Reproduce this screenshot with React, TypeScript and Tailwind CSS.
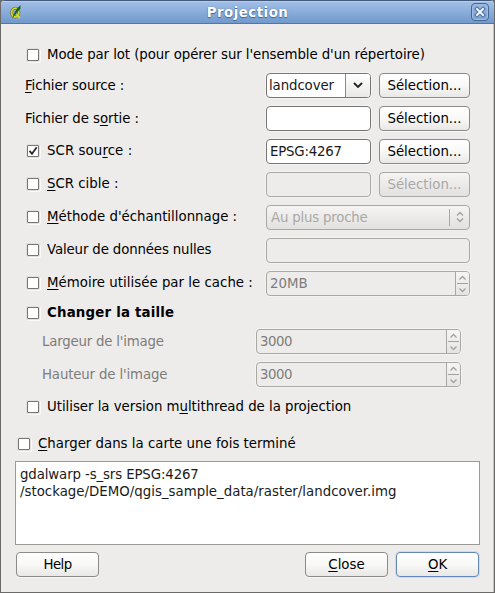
import React, { type ReactNode } from "react";

const U = ({ children }: { children: ReactNode }) => (
  <span className="underline decoration-1 underline-offset-2 [text-decoration-skip-ink:none]">{children}</span>
);

function Check({ checked = false }: { checked?: boolean }) {
  return (
    <span className="flex size-3 shrink-0 items-center justify-center rounded-[1px] border border-[#777674] bg-white shadow-[0_0_0_1px_#e2e0de,1px_1px_0_1px_#f9f9f8]">
      {checked && (
        <svg viewBox="0 0 10 10" className="size-[10px]" fill="none" stroke="#2b2932" strokeWidth="1.8">
          <path d="M1.5 4.8 4 7.8 8.7 1.2" />
        </svg>
      )}
    </span>
  );
}

function CheckLabel({ checked, className = "", children }: { checked?: boolean; className?: string; children: ReactNode }) {
  return (
    <label className={`flex h-6 shrink-0 items-center gap-2 whitespace-nowrap ${className}`}>
      <Check checked={checked} />
      <span className="pb-px">{children}</span>
    </label>
  );
}

function Button({ disabled = false, primary = false, className = "", children }: { disabled?: boolean; primary?: boolean; className?: string; children: ReactNode }) {
  const tone = disabled
    ? "border-[#a9a8a5] bg-linear-to-b from-[#f5f4f3] to-[#e2e1df] text-[#a9a8a6]"
    : primary
      ? "border-[#6488b8] bg-linear-to-b from-white via-[#f8f8f7] to-[#e9e8e6] shadow-[0_0_0_1px_#cfdcec]"
      : "border-[#8c8a86] bg-linear-to-b from-white via-[#f8f8f7] to-[#e9e8e6] shadow-[0_1px_0_#f8f8f7]";
  return (
    <button className={`flex h-[25px] shrink-0 items-center justify-center rounded-[4px] border pb-px ${tone} ${className}`}>
      {children}
    </button>
  );
}

function Field({ disabled = false, className = "", children }: { disabled?: boolean; className?: string; children?: ReactNode }) {
  const tone = disabled
    ? "border-[#a9a8a5] bg-[#edeceb] text-[#7d7c7a] shadow-[0_0_0_1px_#f4f3f2]"
    : "border-[#777674] bg-white text-[#1a1a1a] shadow-[0_0_0_1px_#f4f3f2]";
  return (
    <div className={`flex h-[25px] shrink-0 items-center overflow-hidden rounded-[4px] border ${tone} ${className}`}>
      {children}
    </div>
  );
}

function Spin({ value, className }: { value: string; className: string }) {
  return (
    <Field disabled className={className}>
      <span className="flex-1 pb-px pl-[3px]">{value}</span>
      <span className="flex h-full w-[14px] flex-col items-center justify-between border-l border-[#a9a8a5] bg-linear-to-b from-[#f6f5f4] to-[#e5e4e2]">
        <svg viewBox="0 0 13 23" className="h-[23px] w-[13px]" fill="none" stroke="#a3a19e">
          <path d="M3.5 7.5 6.5 4.5 9.5 7.5M3.5 16.5 6.5 19.5 9.5 16.5" strokeWidth="1.3" />
          <path d="M1 11.5H12" />
        </svg>
      </span>
    </Field>
  );
}

function Row({ label, children }: { label: ReactNode; children?: ReactNode }) {
  return (
    <div className="flex h-[25px] items-start">
      <div className="w-[241px] shrink-0 whitespace-nowrap">{label}</div>
      <div className="flex gap-2">{children}</div>
    </div>
  );
}

export default function App() {
  return (
    <div className="h-[593px] w-[495px] bg-[#6c6a68] font-['DejaVu_Sans',sans-serif] text-[13.33px] leading-[17px] text-black">
      <div className="flex h-full flex-col overflow-hidden rounded-t-[5px] border-x border-b border-[#6c6a68] bg-[#edeceb]">
        <header className="flex h-6 shrink-0 items-center justify-between border-t border-b border-t-[#42597a] border-b-[#5276a8] bg-linear-to-b from-[#a3c0e6] to-[#7199cd] pr-[5px] pl-[9px] shadow-[inset_0_1px_0_#b6cdec]">
          <svg viewBox="0 0 12 16" className="h-4 w-3 shrink-0">
            <ellipse cx="5.3" cy="8.6" rx="3.6" ry="4.4" fill="none" stroke="#5e6a18" strokeWidth="2.8" />
            <ellipse cx="5.3" cy="8.6" rx="3.6" ry="4.4" fill="none" stroke="#d6d32a" strokeWidth="1.8" />
            <path d="M6.5 10.5 9.8 14" stroke="#d6d32a" strokeWidth="2.2" />
            <path d="M2 14.5 4.6 8.5 7 4.5 10.6 1 10.4 4.8 7 8.5Z" fill="#17601f" />
          </svg>
          <h1 className="flex-1 pl-[2px] text-center font-bold tracking-[0.5px] text-white [text-shadow:0_1px_1px_#3f659b,0_0_1px_#3f659b]">Projection</h1>
          <button className="flex size-[18px] shrink-0 items-center justify-center rounded-[4px] border border-[#44678f] bg-linear-to-b from-[#98b7df] to-[#7ea2d2] shadow-[inset_0_0_0_1px_#9fbde4]">
            <svg viewBox="0 0 12 12" className="size-3" fill="none" strokeLinecap="square">
              <path d="M3 3 9 9M9 3 3 9" stroke="#456b9f" strokeWidth="4" />
              <path d="M3 3 9 9M9 3 3 9" stroke="#f3f7fc" strokeWidth="2" />
            </svg>
          </button>
        </header>

        <main className="flex flex-1 flex-col border-r border-[#c5c2bf] px-[14px]">
          <CheckLabel className="mt-[19px] pl-3 tracking-[-0.08px]">Mode par lot (pour opérer sur l'ensemble d'un répertoire)</CheckLabel>

          <section className="mt-[6px] flex flex-col gap-2 pl-[10px]">
            <Row label={<div className="pt-1 pl-px -ml-px tracking-[-0.1px]"><U>F</U>ichier source :</div>}>
              <Field className="w-[105px]">
                <span className="flex-1 pl-[2px] tracking-[-0.1px]">landcover</span>
                <span className="flex h-full w-[25px] items-center justify-center border-l border-[#8c8a86] bg-linear-to-b from-white to-[#e9e8e6]">
                  <svg viewBox="0 0 10 7" className="h-[7px] w-[10px]" fill="none" stroke="#222" strokeWidth="1.8">
                    <path d="M1 1 5 5 9 1" />
                  </svg>
                </span>
              </Field>
              <Button className="w-[91px]">Sélection...</Button>
            </Row>
            <Row label={<div className="pt-1 tracking-[-0.06px]">Fichier de s<U>o</U>rtie :</div>}>
              <Field className="w-[105px]" />
              <Button className="w-[91px]">Sélection...</Button>
            </Row>
            <Row label={<CheckLabel checked className="pl-[2px] tracking-[0.08px]">SCR sou<U>r</U>ce :</CheckLabel>}>
              <Field className="w-[105px] pl-[3px] tracking-[-0.2px]">EPSG:4267</Field>
              <Button className="w-[91px]">Sélection...</Button>
            </Row>
            <Row label={<CheckLabel className="pl-[2px]"><U>S</U>CR cible :</CheckLabel>}>
              <Field disabled className="w-[105px]" />
              <Button disabled className="w-[91px]">Sélection...</Button>
            </Row>
            <Row label={<CheckLabel className="pl-[2px]"><U>M</U>éthode d'échantillonnage :</CheckLabel>}>
              <Button disabled className="w-[204px] pl-1">
                <span className="flex-1 text-left tracking-[-0.2px]">Au plus proche</span>
                <span className="flex h-[17px] w-5 items-center justify-center border-l border-[#a9a8a5]">
                  <svg viewBox="0 0 8 12" className="h-3 w-2" fill="none" stroke="#a3a19e" strokeWidth="1.4">
                    <path d="M1 4.5 4 1.5 7 4.5M1 7.5 4 10.5 7 7.5" />
                  </svg>
                </span>
              </Button>
            </Row>
            <Row label={<CheckLabel className="pl-[2px] tracking-[-0.14px]">Valeur de données nulles</CheckLabel>}>
              <Field disabled className="w-[204px]" />
            </Row>
            <Row label={<CheckLabel className="pl-[2px] tracking-[0.02px]"><U>M</U>émoire utilisée par le cache :</CheckLabel>}>
              <Spin value="20MB" className="w-[204px]" />
            </Row>
          </section>

          <section className="mt-[5px] pl-3">
            <CheckLabel className="font-bold tracking-[0.2px]">Changer la taille</CheckLabel>
            <div className="mt-1 flex flex-col gap-2 pl-[15px] text-[#7d7c7a]">
              <div className="flex items-center"><span className="w-[214px] tracking-[-0.2px]">Largeur de l'image</span><Spin value="3000" className="w-[205px] tracking-[-0.5px]" /></div>
              <div className="flex items-center"><span className="w-[214px] tracking-[-0.15px]">Hauteur de l'image</span><Spin value="3000" className="w-[205px] tracking-[-0.5px]" /></div>
            </div>
          </section>

          <CheckLabel className="mt-2 pl-3 tracking-[-0.03px]">Utiliser la version m<U>u</U>ltithread de la projection</CheckLabel>
          <CheckLabel className="mt-[13px] pl-[3px]"><U>C</U>harger dans la carte une fois terminé</CheckLabel>

          <div className="mt-[5px] h-[84px] w-[465px] shrink-0 border border-[#9c9a96] bg-white px-1 pt-1 text-[#1a1a1a]">
            <div className="tracking-[-0.12px]">gdalwarp -s_srs EPSG:4267</div>
            <div className="tracking-[0.01px]">/stockage/DEMO/qgis_sample_data/raster/landcover.img</div>
          </div>

          <footer className="mt-[7px] flex gap-2 pl-[1px]">
            <Button className="mr-auto w-[83px] tracking-[-0.6px]">Help</Button>
            <Button className="w-[83px]"><span><U>C</U>lose</span></Button>
            <Button primary className="w-[83px]"><span><U>O</U>K</span></Button>
          </footer>
        </main>
      </div>
    </div>
  );
}
